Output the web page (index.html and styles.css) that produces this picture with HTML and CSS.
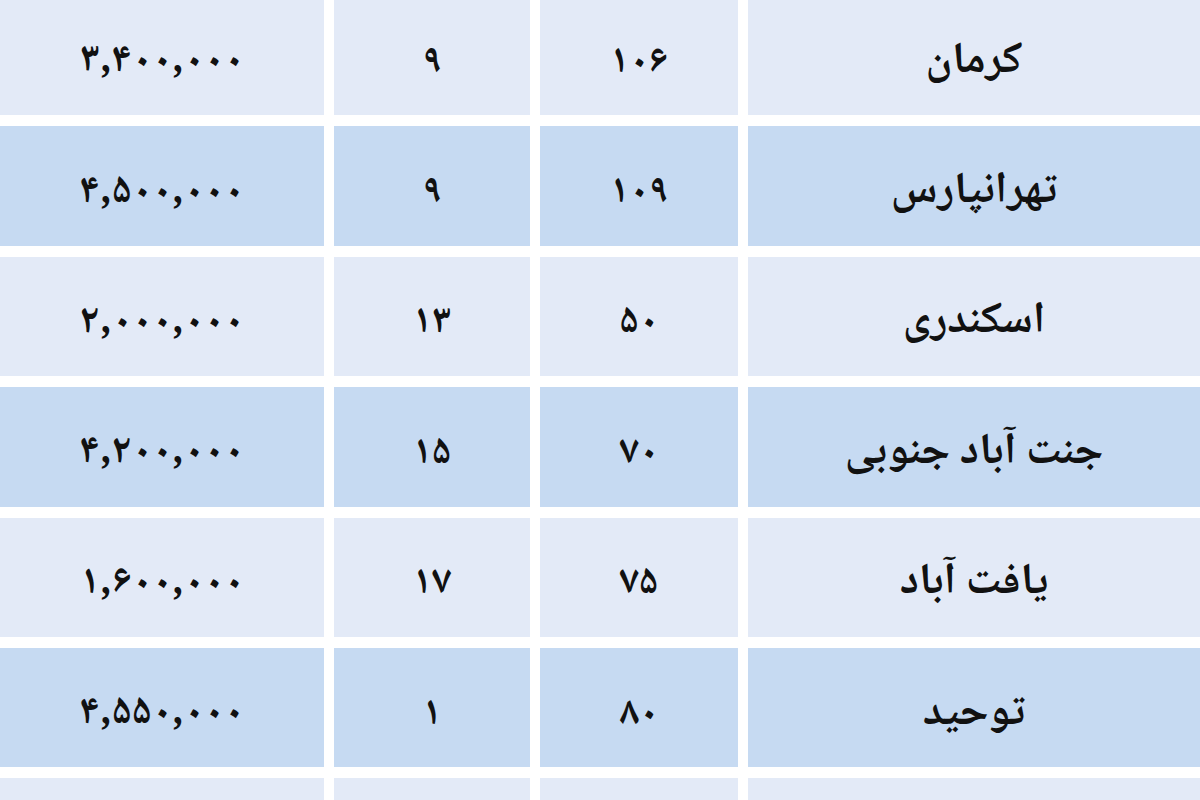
FILE: index.html
```html
<!DOCTYPE html>
<html lang="fa" dir="rtl">
<head>
<meta charset="utf-8">
<title>جدول قیمت</title>
<link rel="stylesheet" href="styles.css">
</head>
<body>
<div class="table">
  <div class="row light">
    <div class="cell name">کرمان</div>
    <div class="cell">۱۰۶</div>
    <div class="cell">۹</div>
    <div class="cell price">۳,۴۰۰,۰۰۰</div>
  </div>
  <div class="row dark">
    <div class="cell name">تهرانپارس</div>
    <div class="cell">۱۰۹</div>
    <div class="cell">۹</div>
    <div class="cell price">۴,۵۰۰,۰۰۰</div>
  </div>
  <div class="row light">
    <div class="cell name">اسکندری</div>
    <div class="cell">۵۰</div>
    <div class="cell">۱۳</div>
    <div class="cell price">۲,۰۰۰,۰۰۰</div>
  </div>
  <div class="row dark">
    <div class="cell name">جنت آباد جنوبی</div>
    <div class="cell">۷۰</div>
    <div class="cell">۱۵</div>
    <div class="cell price">۴,۲۰۰,۰۰۰</div>
  </div>
  <div class="row light">
    <div class="cell name">یافت آباد</div>
    <div class="cell">۷۵</div>
    <div class="cell">۱۷</div>
    <div class="cell price">۱,۶۰۰,۰۰۰</div>
  </div>
  <div class="row dark">
    <div class="cell name">توحید</div>
    <div class="cell">۸۰</div>
    <div class="cell">۱</div>
    <div class="cell price">۴,۵۵۰,۰۰۰</div>
  </div>
  <div class="row light">
    <div class="cell name"></div>
    <div class="cell"></div>
    <div class="cell"></div>
    <div class="cell price"></div>
  </div>
</div>
</body>
</html>
```

FILE: styles.css
```css
html, body {
  margin: 0;
  padding: 0;
  background: #ffffff;
  width: 1200px;
  height: 800px;
  overflow: hidden;
}

body {
  font-family: "Noto Naskh Arabic", "Noto Sans Arabic", "DejaVu Sans", sans-serif;
  color: #111111;
}

.table {
  display: flex;
  flex-direction: column;
  gap: 11px;
  margin-top: -4px;
}

.row {
  display: grid;
  grid-template-columns: 1fr 198px 196px 324px;
  column-gap: 10px;
  height: 119.4px;
  flex-shrink: 0;
}

.cell {
  display: flex;
  align-items: center;
  justify-content: center;
  padding-top: 14px;
  box-sizing: border-box;
  font-size: 40px;
  font-weight: 700;
  line-height: 1;
}

.name {
  font-size: 44px;
}

.light .cell {
  background: #e3eaf7;
}

.dark .cell {
  background: #c6daf2;
}

.price {
  font-size: 41px;
}
```
